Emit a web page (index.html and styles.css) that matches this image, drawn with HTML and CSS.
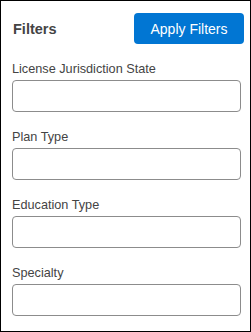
FILE: index.html
```html
<!DOCTYPE html>
<html lang="en">
<head>
	<meta charset="UTF-8">
	<title>Filters</title>
	<link rel="stylesheet" href="styles.css">
</head>
<body>
	<div class="panel">
		<div class="panel_head">
			<h2 class="panel_title">Filters</h2>
			<button class="btn_apply">Apply Filters</button>
		</div>
		<div class="field">
			<label class="field_label">License Jurisdiction State</label>
			<input class="field_input" type="text">
		</div>
		<div class="field">
			<label class="field_label">Plan Type</label>
			<input class="field_input" type="text">
		</div>
		<div class="field">
			<label class="field_label">Education Type</label>
			<input class="field_input" type="text">
		</div>
		<div class="field">
			<label class="field_label">Specialty</label>
			<input class="field_input" type="text">
		</div>
	</div>
</body>
</html>
```

FILE: styles.css
```css
*{
	margin: 0;
	padding: 0;
	box-sizing: border-box;
}
body{
	background: #fff;
	font-family: "Liberation Sans", Arial, sans-serif;
}
.panel{
	width: 251px;
	height: 332px;
	border: 1px solid #000;
	padding: 12px 6px 0 11px;
}
.panel_head{
	display: flex;
	justify-content: space-between;
	align-items: center;
	height: 31px;
}
.panel_title{
	font-size: 14.5px;
	font-weight: bold;
	color: #444;
	padding-left: 1px;
}
.btn_apply{
	width: 110px;
	height: 31px;
	border: none;
	border-radius: 4px;
	background: #0176d3;
	color: #fff;
	font-family: "Liberation Sans", Arial, sans-serif;
	font-size: 14px;
}
.field{
	margin-top: 17px;
}
.field:first-of-type{
	margin-top: 18px;
}
.field_label{
	display: block;
	font-size: 12.7px;
	line-height: 16px;
	color: #444;
	margin-bottom: 3px;
}
.field_input{
	display: block;
	width: 229px;
	height: 32px;
	border: 1px solid #8c8c8c;
	border-radius: 4px;
	background: #fff;
}
```
